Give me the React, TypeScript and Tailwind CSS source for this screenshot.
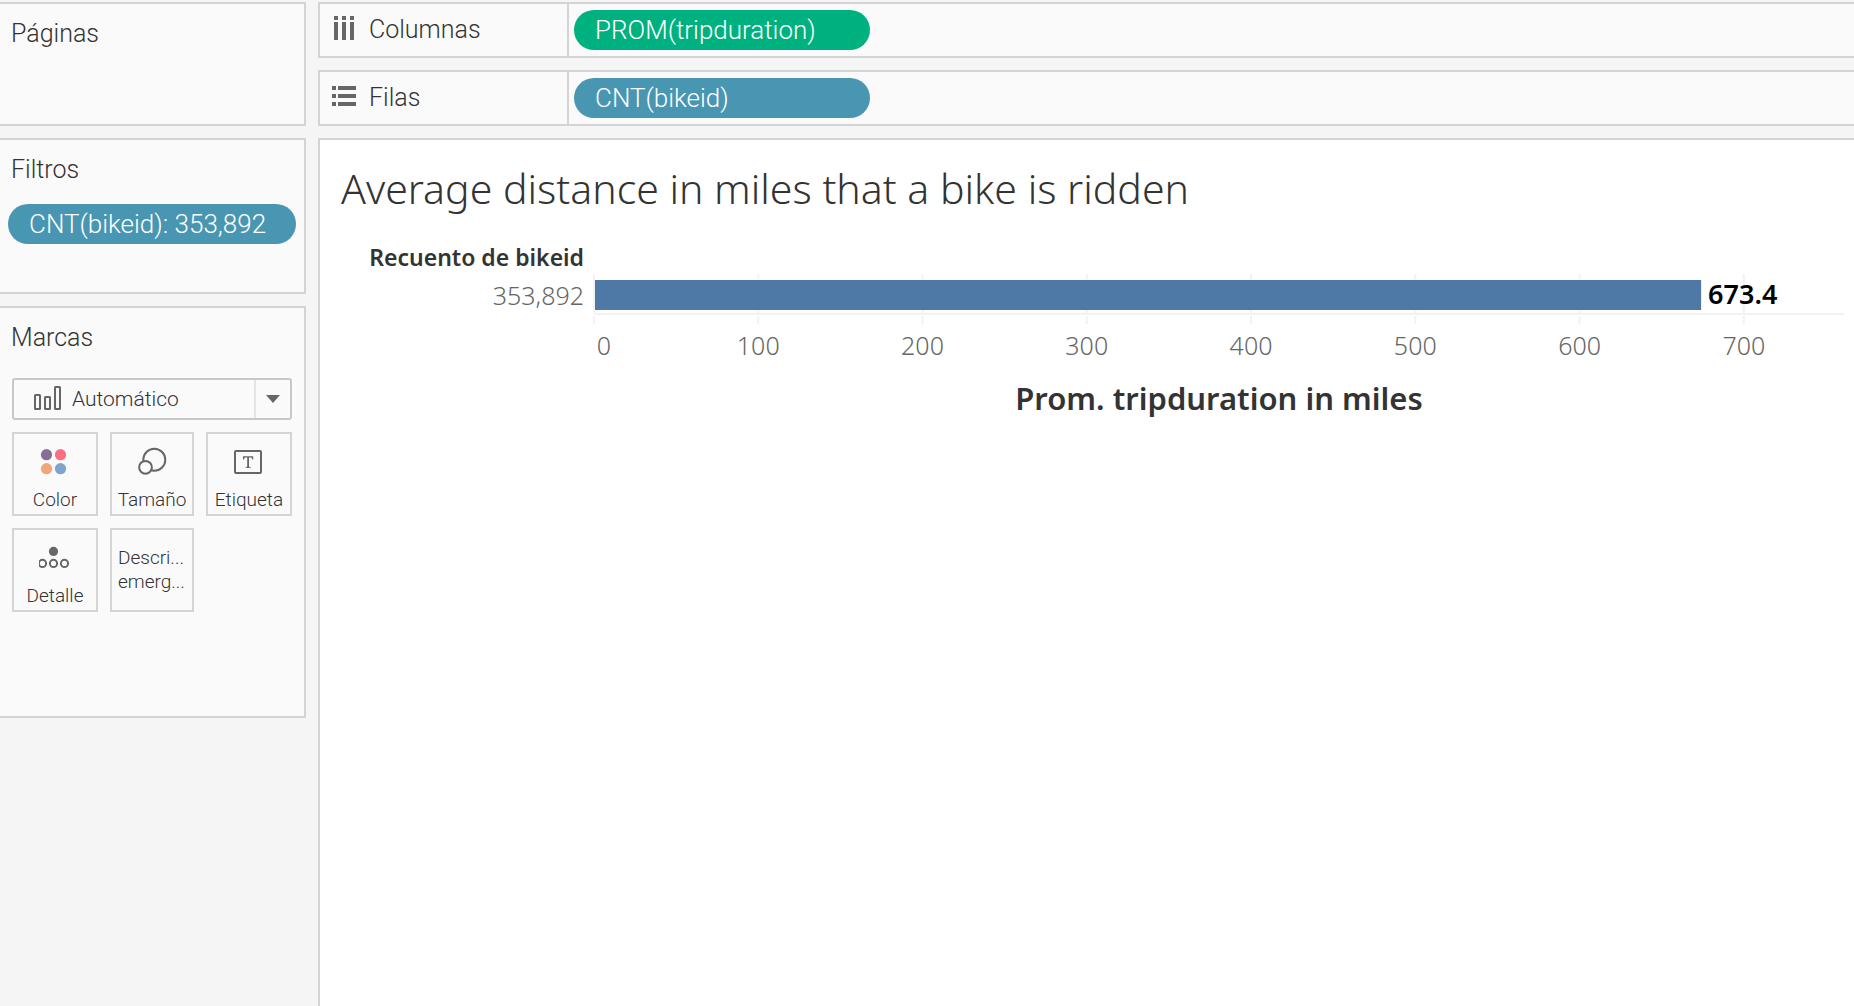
import React from "react";

const ui = "font-['Roboto',sans-serif]";
const viz = "font-['Noto_Sans',sans-serif]";

const AXIS_MAX = 761;
const TICKS = [0, 100, 200, 300, 400, 500, 600, 700];
const AVERAGE = 673.4;

const pct = (value: number) => `${(value / AXIS_MAX) * 100}%`;

function ColumnsIcon() {
  return (
    <svg width="24" height="24" viewBox="0 0 24 24" fill="#666" aria-hidden="true" className="mb-1">
      {[2, 10, 18].map((x) => (
        <React.Fragment key={x}>
          <rect x={x} y="0" width="4" height="4" />
          <rect x={x} y="6" width="4" height="18" />
        </React.Fragment>
      ))}
    </svg>
  );
}

function RowsIcon() {
  return (
    <svg width="24" height="24" viewBox="0 0 24 24" fill="#666" aria-hidden="true" className="mb-1">
      {[2, 10, 18].map((y) => (
        <React.Fragment key={y}>
          <rect x="0" y={y} width="4" height="4" />
          <rect x="6" y={y} width="18" height="4" />
        </React.Fragment>
      ))}
    </svg>
  );
}

function BarsIcon() {
  return (
    <svg width="28" height="24" viewBox="0 0 28 24" fill="none" stroke="#666" strokeWidth="2" aria-hidden="true">
      <rect x="1" y="9" width="5" height="14" rx="0.5" />
      <rect x="11" y="11" width="5" height="12" rx="0.5" />
      <rect x="21" y="1" width="5" height="22" rx="0.5" />
    </svg>
  );
}

function ColorIcon() {
  return (
    <svg width="32" height="32" viewBox="0 0 32 32" aria-hidden="true">
      <circle cx="7.5" cy="8.7" r="5.6" fill="#856f99" />
      <circle cx="21.5" cy="8.7" r="5.6" fill="#fa7080" />
      <circle cx="7.5" cy="22.7" r="5.6" fill="#f2a47b" />
      <circle cx="21.5" cy="22.7" r="5.6" fill="#80a3cb" />
    </svg>
  );
}

function SizeIcon() {
  return (
    <svg width="32" height="32" viewBox="0 0 32 32" fill="#fafafa" stroke="#666" strokeWidth="2" aria-hidden="true">
      <circle cx="18.3" cy="13.8" r="11" />
      <circle cx="9.5" cy="21.3" r="6.4" />
    </svg>
  );
}

function LabelIcon() {
  return (
    <svg width="32" height="32" viewBox="0 0 32 32" aria-hidden="true">
      <rect x="2" y="5" width="26" height="22" rx="1" fill="none" stroke="#666" strokeWidth="2" />
      <path
        d="M10 10.2H20.2V13.4H19.2C19 12 18.6 11.5 17.4 11.5H16V20.2C16 21 16.4 21.2 17.6 21.3V22H12.6V21.3C13.8 21.2 14.2 21 14.2 20.2V11.5H12.8C11.6 11.5 11.2 12 11 13.4H10Z"
        fill="#666"
      />
    </svg>
  );
}

function DetailIcon() {
  return (
    <svg width="32" height="32" viewBox="0 0 32 32" fill="none" stroke="#666" strokeWidth="2" aria-hidden="true">
      <circle cx="14.5" cy="9.4" r="4.6" fill="#666" stroke="none" />
      <circle cx="3.5" cy="21.4" r="3.6" />
      <circle cx="14.5" cy="21.4" r="3.6" />
      <circle cx="25.5" cy="21.4" r="3.6" />
    </svg>
  );
}

function Panel({ title, className, children }: { title: string; className: string; children?: React.ReactNode }) {
  return (
    <section className={`border-2 border-l-0 border-[#d4d4d4] bg-[#fafafa] pt-[14px] ${className}`}>
      <h2 className="pl-[11px] text-[25px] leading-8 text-[#333]">{title}</h2>
      {children}
    </section>
  );
}

function MarkButton({ label, icon }: { label: string; icon: React.ReactNode }) {
  return (
    <button
      type="button"
      className="flex h-[84px] flex-col items-center justify-between border-2 border-[#d4d4d4] bg-[#fafafa] pt-3 pb-[2px] text-[19px] leading-6 text-[#333]"
    >
      {icon}
      <span>{label}</span>
    </button>
  );
}

function Shelf({
  label,
  icon,
  field,
  pillColor,
}: {
  label: string;
  icon: React.ReactNode;
  field: string;
  pillColor: string;
}) {
  return (
    <section className="flex h-14 border-2 border-r-0 border-[#d4d4d4] bg-[#fafafa]">
      <div className="flex w-[249px] shrink-0 items-center gap-[13px] border-r-2 border-[#d4d4d4] pl-3">
        {icon}
        <h2 className="text-[25px] leading-8 text-[#333]">{label}</h2>
      </div>
      <div className="flex flex-1 items-center pl-[5px]">
        <button
          type="button"
          className={`flex h-10 w-[296px] items-center rounded-full pl-[21px] text-[26px] leading-8 text-white ${pillColor}`}
        >
          {field}
        </button>
      </div>
    </section>
  );
}

function Chart() {
  return (
    <div className={`grid grid-cols-[274px_1fr] pt-6 pr-[10px] ${viz}`}>
      <div className="h-[34px] pr-[10px] text-right text-[23px] leading-[34px] font-semibold text-[#333]">
        Recuento de bikeid
      </div>
      <div />
      <div className="pt-1 pr-[10px] text-right text-[25px] leading-[34px] text-[#666]">353,892</div>
      <svg className="h-[100px] w-full overflow-visible" role="img" aria-label="Prom. tripduration: 673.4">
        {TICKS.map((t) => (
          <g key={t} stroke="#f2f2f2" strokeWidth="2">
            <line x1={pct(t)} x2={pct(t)} y1="0" y2="39" />
            <line x1={pct(t)} x2={pct(t)} y1="42" y2="50" />
          </g>
        ))}
        <line x1="0" x2="100%" y1="40" y2="40" stroke="#f2f2f2" strokeWidth="2" />
        <rect x="1" y="6" width={pct(AVERAGE)} height="30" fill="#4e79a7" />
        <text x={pct(AVERAGE)} dx="8" y="30" fontSize="27" fontWeight="600" fill="#000">
          673.4
        </text>
        {TICKS.map((t) => (
          <text
            key={t}
            x={pct(t)}
            dx={t === 0 ? 10 : 0}
            y="81"
            textAnchor="middle"
            fontSize="25"
            fill="#666"
          >
            {t}
          </text>
        ))}
      </svg>
      <div />
      <div className="pt-1 text-center text-[31px] leading-10 font-semibold text-[#333]">
        Prom. tripduration in miles
      </div>
    </div>
  );
}

export default function App() {
  return (
    <div className={`flex min-h-screen gap-3 bg-[#f5f5f5] pt-[2px] font-[350] ${ui}`}>
      <aside className="flex w-[306px] shrink-0 flex-col gap-3">
        <Panel title="Páginas" className="h-[124px]" />
        <Panel title="Filtros" className="h-[156px]">
          <div className="px-2 pt-[18px]">
            <button
              type="button"
              className="flex h-10 w-full items-center rounded-full bg-[#4996b2] pl-[21px] text-[26px] leading-8 whitespace-nowrap text-white"
            >
              CNT(bikeid): 353,892
            </button>
          </div>
        </Panel>
        <Panel title="Marcas" className="h-[412px]">
          <div className="flex flex-col gap-3 pt-6 pr-3 pl-3">
            <div className="relative">
              <select
                aria-label="Tipo de marca"
                className="block h-[42px] w-full appearance-none rounded-[3px] border-2 border-[#c8c8c8] bg-[#fafafa] pl-[58px] text-[21px] leading-8 text-[#333]"
              >
                <option>Automático</option>
              </select>
              <span className="pointer-events-none absolute top-2 left-[22px]">
                <BarsIcon />
              </span>
              <span className="pointer-events-none absolute inset-y-[2px] right-[2px] flex w-9 items-center justify-center border-l-2 border-[#e4e4e4]">
                <svg width="14" height="8" viewBox="0 0 14 8" fill="#666" aria-hidden="true">
                  <path d="M0 0H14L7 8Z" />
                </svg>
              </span>
            </div>
            <div className="grid grid-cols-[86fr_84fr_86fr] gap-3">
              <MarkButton label="Color" icon={<ColorIcon />} />
              <MarkButton label="Tamaño" icon={<SizeIcon />} />
              <MarkButton label="Etiqueta" icon={<LabelIcon />} />
              <MarkButton label="Detalle" icon={<DetailIcon />} />
              <button
                type="button"
                className="h-[84px] border-2 border-[#d4d4d4] bg-[#fafafa] pl-[6px] text-left text-[19px] leading-6 text-[#333]"
              >
                Descri...
                <br />
                emerg...
              </button>
            </div>
          </div>
        </Panel>
      </aside>
      <main className="flex min-w-0 flex-1 flex-col gap-3">
        <Shelf label="Columnas" icon={<ColumnsIcon />} field="PROM(tripduration)" pillColor="bg-[#00b180]" />
        <Shelf label="Filas" icon={<RowsIcon />} field="CNT(bikeid)" pillColor="bg-[#4996b2]" />
        <section className="flex-1 border-t-2 border-l-2 border-[#d4d4d4] bg-white pt-5">
          <h1 className={`pl-[21px] text-[41px] leading-[56px] font-light text-[#333] ${viz}`}>
            Average distance in miles that a bike is ridden
          </h1>
          <Chart />
        </section>
      </main>
    </div>
  );
}
